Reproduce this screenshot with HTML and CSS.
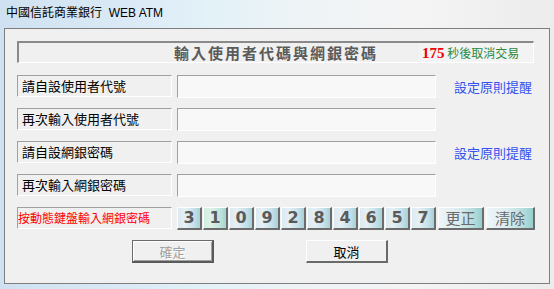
FILE: index.html
```html
<!DOCTYPE html>
<html lang="zh-Hant">
<head>
<meta charset="utf-8">
<title>WEB ATM</title>
<link rel="stylesheet" href="styles.css">
</head>
<body>
<div class="titlebar">中國信託商業銀行&nbsp; WEB ATM</div>
<div class="panel">
  <div class="header">
    <span class="spacer"></span>
    <div class="title">輸入使用者代碼與網銀密碼</div>
    <div class="countdown"><b class="secs">175</b> 秒後取消交易</div>
  </div>
  <div class="row first">
    <div class="label">請自設使用者代號</div>
    <div class="input"></div>
    <span class="hint">設定原則提醒</span>
  </div>
  <div class="row">
    <div class="label">再次輸入使用者代號</div>
    <div class="input"></div>
  </div>
  <div class="row">
    <div class="label">請自設網銀密碼</div>
    <div class="input"></div>
    <span class="hint">設定原則提醒</span>
  </div>
  <div class="row">
    <div class="label">再次輸入網銀密碼</div>
    <div class="input"></div>
  </div>
  <div class="row">
    <div class="label red">按動態鍵盤輸入網銀密碼</div>
    <div class="keys">
      <span class="key">3</span>
      <span class="key green">1</span>
      <span class="key">0</span>
      <span class="key">9</span>
      <span class="key">2</span>
      <span class="key">8</span>
      <span class="key">4</span>
      <span class="key">6</span>
      <span class="key">5</span>
      <span class="key">7</span>
      <span class="key text w47">更正</span>
      <span class="key text w49">清除</span>
    </div>
  </div>
  <div class="buttons">
    <button class="btn default" disabled>確定</button>
    <button class="btn">取消</button>
  </div>
</div>
</body>
</html>
```

FILE: styles.css
```css
html, body {
  margin: 0;
  padding: 0;
}
body {
  width: 554px;
  height: 289px;
  overflow: hidden;
  background: linear-gradient(to right, #cfe1f0 0%, #dbeaf6 25%, #e3f2f8 38%, #eef3f6 55%, #f4f4f4 75%, #ececec 100%);
  font-family: "Noto Sans CJK TC", sans-serif;
}
.titlebar {
  height: 28px;
  padding-left: 6px;
  font-family: "Liberation Sans", "Noto Sans CJK TC", sans-serif;
  font-size: 12px;
  line-height: 27px;
  color: #000;
  white-space: nowrap;
}
.panel {
  box-sizing: border-box;
  margin-left: 4px;
  width: 546px;
  height: 256px;
  border: 1px solid #7e7e7e;
  background: #f0f0f0;
  padding: 12px 0 0 12px;
}
.header {
  box-sizing: border-box;
  width: 517px;
  height: 22px;
  border-style: solid;
  border-width: 2px 1px 1px 2px;
  border-color: #8a8a8a #fff #fff #8a8a8a;
  display: grid;
  grid-template-columns: 1fr auto 1fr;
  align-items: center;
}
.title {
  font-size: 15px;
  font-weight: bold;
  letter-spacing: 2px;
  color: #5a5a5a;
  line-height: 19px;
  white-space: nowrap;
}
.countdown {
  justify-self: end;
  box-sizing: border-box;
  width: 114px;
  height: 19px;
  padding-left: 3px;
  background: #f3f3f3;
  font-size: 12px;
  line-height: 19px;
  color: #2b8a3e;
  white-space: nowrap;
}
.secs {
  font-family: "Liberation Serif", serif;
  font-size: 15px;
  font-weight: bold;
  color: #f00000;
}
.row {
  display: flex;
  align-items: center;
  height: 22px;
  margin-top: 11px;
}
.row.first {
  margin-top: 12px;
}
.label {
  box-sizing: border-box;
  width: 155px;
  height: 22px;
  border: 1px solid;
  border-color: #a0a0a0 #fff #fff #a0a0a0;
  padding-left: 4px;
  font-size: 13px;
  line-height: 20px;
  color: #000;
  white-space: nowrap;
}
.label.red {
  padding-left: 0;
  font-size: 12px;
  color: #f00;
}
.input {
  box-sizing: border-box;
  margin-left: 5px;
  width: 259px;
  height: 23px;
  border: 1px solid;
  border-color: #a0a0a0 #fff #fff #a0a0a0;
  background: #f8f8f8;
}
.hint {
  margin-left: 18px;
  font-size: 13px;
  color: #3452ee;
  white-space: nowrap;
}
.keys {
  margin-left: 5px;
  display: flex;
  gap: 1px;
}
.key {
  box-sizing: border-box;
  width: 25px;
  height: 23px;
  border-style: solid;
  border-width: 1px 2px 2px 1px;
  border-color: #fdfdfd #6c6c6c #6c6c6c #fdfdfd;
  background: linear-gradient(to right, #dbe9f1 0%, #e6f0f5 30%, #c9e1ea 70%, #a7d2d6 100%);
  display: flex;
  align-items: center;
  justify-content: center;
  font-family: "DejaVu Sans", sans-serif;
  font-weight: bold;
  font-size: 16px;
  color: #5a5a5a;
}
.key.green {
  background: linear-gradient(to right, #d0eee0 0%, #dcf1e8 30%, #c3e5dc 70%, #a5d4d2 100%);
}
.key.text {
  font-family: "Noto Sans CJK TC", sans-serif;
  font-weight: normal;
  font-size: 15px;
  color: #6a6a6a;
  background: linear-gradient(to right, #eef5f8 0%, #dcecf0 45%, #b4dcdc 80%, #96cfce 100%);
}
.key.w47 {
  margin-left: 1px;
  width: 46px;
}
.key.w49 {
  margin-left: 1px;
  width: 49px;
}
.buttons {
  display: flex;
  gap: 92px;
  margin: 11px 0 0 115px;
}
.btn {
  box-sizing: border-box;
  width: 82px;
  height: 23px;
  padding: 0;
  margin: 0;
  background: #f0f0f0;
  border-style: solid;
  border-width: 1px 2px 2px 1px;
  border-color: #fff #6a6a6a #6a6a6a #fff;
  font-family: "Noto Sans CJK TC", sans-serif;
  font-size: 13px;
  line-height: 19px;
  color: #000;
}
.btn.default {
  border-color: #6a6a6a #5a5a5a #5a5a5a #6a6a6a;
  box-shadow: inset 1px 1px #fff, inset -1px -1px #a0a0a0;
  color: #a0a0a0;
  text-shadow: 1px 1px #fff;
}
```
